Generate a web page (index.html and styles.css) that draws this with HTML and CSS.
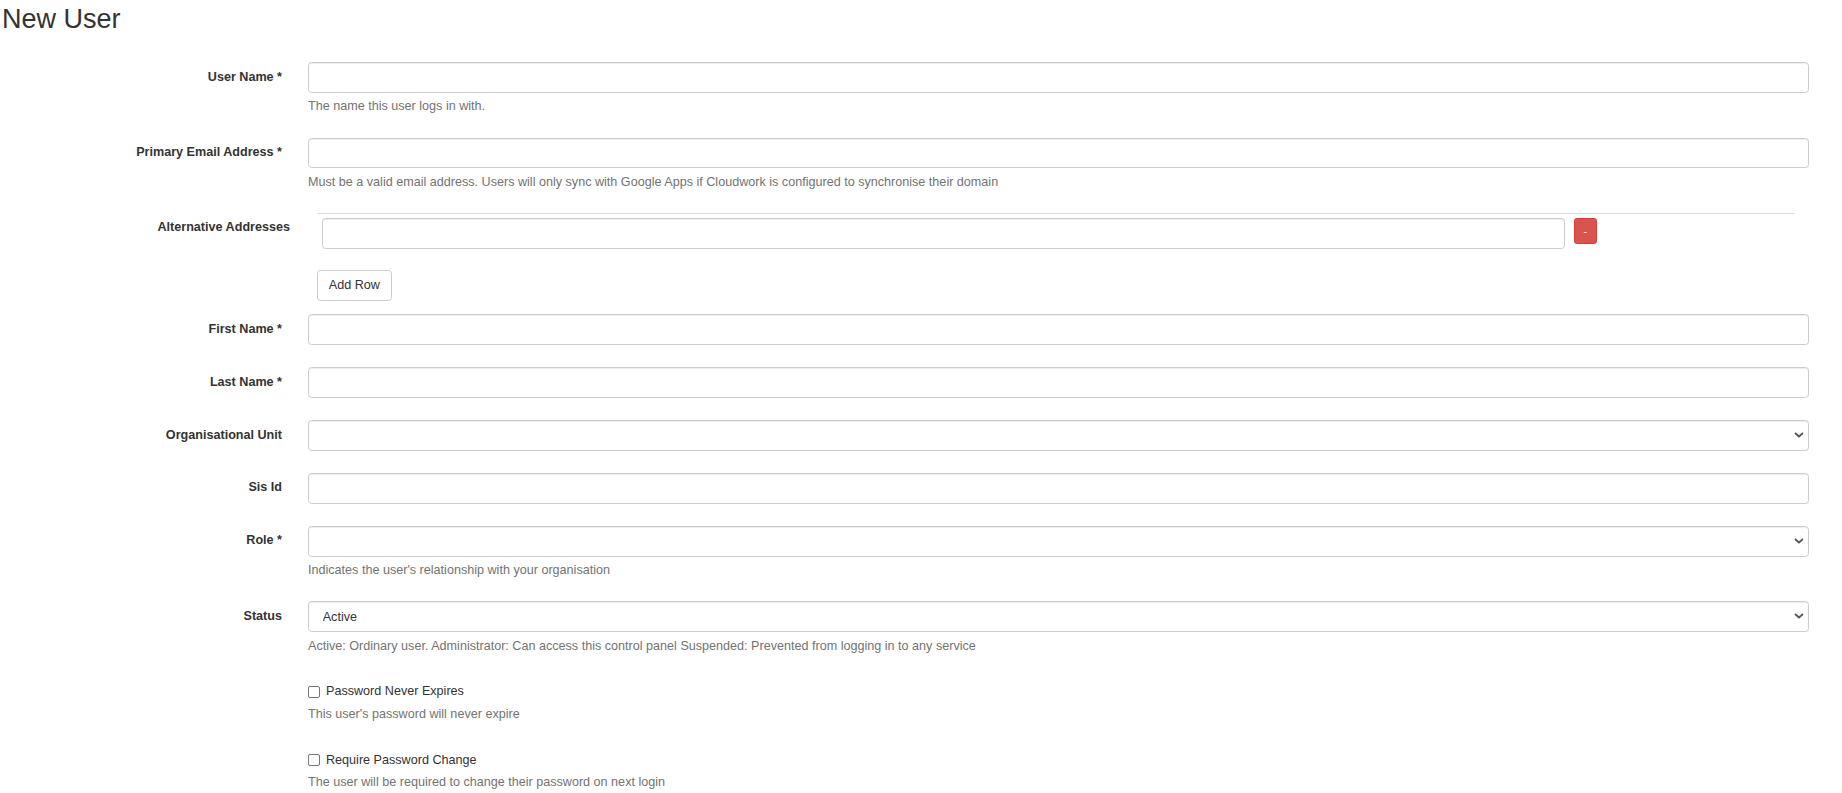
FILE: index.html
```html
<!DOCTYPE html>
<html lang="en">
<head>
    <meta charset="UTF-8">
    <meta name="viewport" content="width=device-width, initial-scale=1.0">
    <title>New User</title>
    <link rel="stylesheet" href="styles.css">
</head>
<body>
    <div class="page">
        <h2 class="page-title">New User</h2>

        <form class="user-form">
            <div class="form-group">
                <label class="control-label" for="username">User Name *</label>
                <div class="field">
                    <input type="text" id="username" class="form-control">
                    <p class="help-block">The name this user logs in with.</p>
                </div>
            </div>

            <div class="form-group">
                <label class="control-label" for="email">Primary Email Address *</label>
                <div class="field">
                    <input type="email" id="email" class="form-control">
                    <p class="help-block">Must be a valid email address. Users will only sync with Google Apps if Cloudwork is configured to synchronise their domain</p>
                </div>
            </div>

            <div class="form-group">
                <label class="control-label alt-label">Alternative Addresses</label>
                <div class="field field-flush">
                    <div class="alt-wrap">
                        <div class="alt-table">
                            <div class="alt-row">
                                <div class="alt-cell">
                                    <input type="text" class="form-control" name="alt[]">
                                </div>
                                <div class="alt-cell">
                                    <button type="button" class="btn btn-remove">-</button>
                                </div>
                            </div>
                        </div>
                        <button type="button" class="btn btn-default">Add Row</button>
                    </div>
                </div>
            </div>

            <div class="form-group">
                <label class="control-label" for="firstname">First Name *</label>
                <div class="field">
                    <input type="text" id="firstname" class="form-control">
                </div>
            </div>

            <div class="form-group">
                <label class="control-label" for="lastname">Last Name *</label>
                <div class="field">
                    <input type="text" id="lastname" class="form-control">
                </div>
            </div>

            <div class="form-group">
                <label class="control-label" for="orgunit">Organisational Unit</label>
                <div class="field">
                    <div class="select-wrap">
                        <select id="orgunit" class="form-control">
                            <option></option>
                        </select>
                        <svg class="select-arrow" width="10" height="6" viewBox="0 0 10 6"><path d="M1 1l4 3.5L9 1" fill="none" stroke="#555" stroke-width="1.8"/></svg>
                    </div>
                </div>
            </div>

            <div class="form-group">
                <label class="control-label" for="sisid">Sis Id</label>
                <div class="field">
                    <input type="text" id="sisid" class="form-control">
                </div>
            </div>

            <div class="form-group">
                <label class="control-label" for="role">Role *</label>
                <div class="field">
                    <div class="select-wrap">
                        <select id="role" class="form-control">
                            <option></option>
                        </select>
                        <svg class="select-arrow" width="10" height="6" viewBox="0 0 10 6"><path d="M1 1l4 3.5L9 1" fill="none" stroke="#555" stroke-width="1.8"/></svg>
                    </div>
                    <p class="help-block">Indicates the user's relationship with your organisation</p>
                </div>
            </div>

            <div class="form-group">
                <label class="control-label" for="status">Status</label>
                <div class="field">
                    <div class="select-wrap">
                        <select id="status" class="form-control">
                            <option>Active</option>
                            <option>Administrator</option>
                            <option>Suspended</option>
                        </select>
                        <svg class="select-arrow" width="10" height="6" viewBox="0 0 10 6"><path d="M1 1l4 3.5L9 1" fill="none" stroke="#555" stroke-width="1.8"/></svg>
                    </div>
                    <p class="help-block">Active: Ordinary user. Administrator: Can access this control panel Suspended: Prevented from logging in to any service</p>
                </div>
            </div>

            <div class="form-group">
                <div class="field field-offset">
                    <div class="checkbox">
                        <label><input type="checkbox"> Password Never Expires</label>
                    </div>
                    <p class="help-block">This user's password will never expire</p>
                </div>
            </div>

            <div class="form-group">
                <div class="field field-offset">
                    <div class="checkbox">
                        <label><input type="checkbox"> Require Password Change</label>
                    </div>
                    <p class="help-block">The user will be required to change their password on next login</p>
                </div>
            </div>
        </form>
    </div>
</body>
</html>
```

FILE: styles.css
```css
* {
    box-sizing: border-box;
}

body {
    margin: 0;
    font-family: "Liberation Sans", Arial, Helvetica, sans-serif;
    font-size: 12.6px;
    line-height: 18px;
    color: #333;
    background: #fff;
}

.page {
    padding: 0 33px 0 2px;
}

.page-title {
    font-size: 27px;
    font-weight: normal;
    line-height: 29.7px;
    margin: 5px 0 0 0;
    color: #333;
}

.user-form {
    margin-top: 27.6px;
}

.form-group {
    display: grid;
    grid-template-columns: 280px 1fr;
    column-gap: 26px;
    margin-bottom: 13.4px;
}

.control-label {
    text-align: right;
    font-weight: bold;
    padding-top: 5.5px;
}

.alt-label {
    margin-right: -8px;
    padding-top: 4.5px;
}

.field {
    grid-column: 2;
    padding-bottom: 9px;
    min-width: 0;
}

.field-flush {
    padding-bottom: 0;
}

.form-control {
    display: block;
    width: 100%;
    height: 30.6px;
    padding: 5.4px 10.8px;
    font-family: inherit;
    font-size: 12.6px;
    line-height: 18px;
    color: #555;
    background: #fff;
    border: 1px solid #ccc;
    border-radius: 3.6px;
    box-shadow: inset 0 1px 1px rgba(0, 0, 0, 0.075);
    outline: none;
}

.help-block {
    margin: 4.5px 0 0 0;
    color: #737373;
}

/* select with drawn chevron */
.select-wrap {
    position: relative;
}

.select-wrap select {
    appearance: none;
    -webkit-appearance: none;
    padding-left: 13.7px;
    color: #333;
}

.select-arrow {
    position: absolute;
    right: 5px;
    top: 12px;
    pointer-events: none;
}

/* alternative addresses table */
.alt-wrap {
    padding: 0 14px 0 9px;
}

.alt-table {
    margin-bottom: 16.5px;
}

.alt-row {
    display: grid;
    grid-template-columns: 1fr 226px;
    border-top: 1px solid #ddd;
}

.alt-cell {
    padding: 4px 4.5px 4.5px;
}

.btn {
    display: inline-block;
    font-family: inherit;
    cursor: pointer;
    border: 1px solid transparent;
}

.btn-default {
    padding: 5.4px 10.8px;
    font-size: 12.6px;
    line-height: 18px;
    color: #333;
    background: #fff;
    border-color: #ccc;
    border-radius: 3.6px;
}

.btn-remove {
    padding: 4.5px 9px;
    font-size: 10.8px;
    line-height: 15px;
    color: #fff;
    background: #d9534f;
    border-color: #d43f3a;
    border-radius: 2.7px;
}

/* checkboxes */
.checkbox {
    padding-top: 5.5px;
    min-height: 23.5px;
}

.checkbox label {
    display: block;
    position: relative;
    padding-left: 18px;
    font-weight: normal;
    cursor: pointer;
}

.checkbox input {
    position: absolute;
    left: 0;
    top: 3.6px;
    margin: 0;
    width: 11.7px;
    height: 11.7px;
    appearance: none;
    -webkit-appearance: none;
    border: 1px solid #767676;
    border-radius: 2px;
    background: #fff;
}
```
